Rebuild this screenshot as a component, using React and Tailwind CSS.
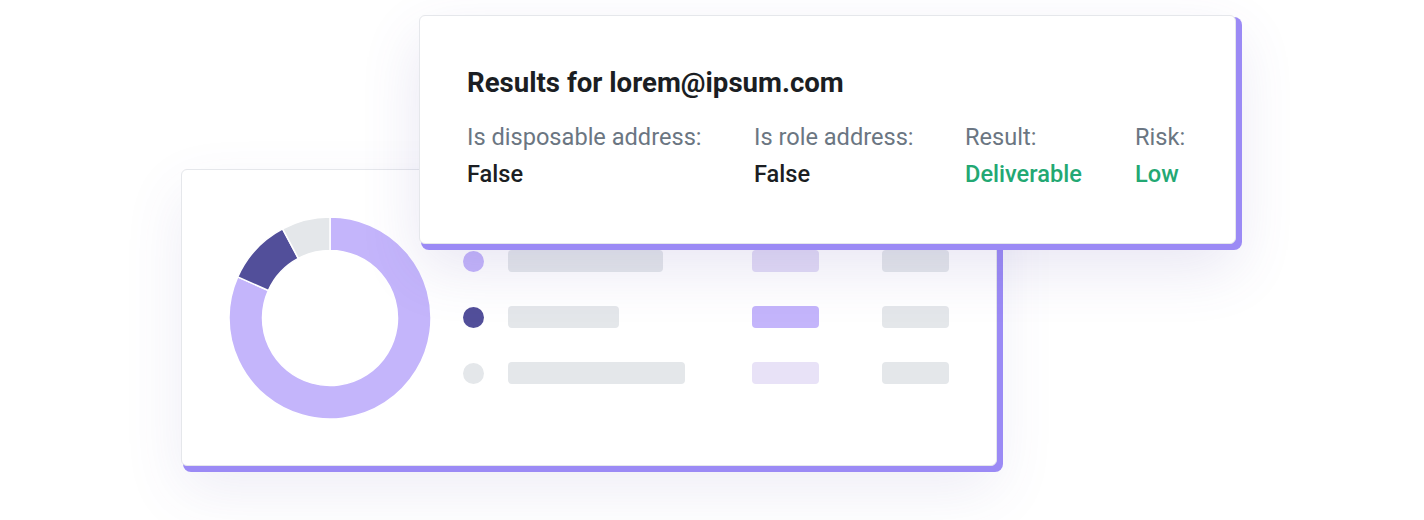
import React from 'react';

const FONT = { fontFamily: 'Roboto, "Liberation Sans", sans-serif' };

// donut segments in degrees, clockwise from 12 o'clock
const segments = [
  { from: 0, to: 294, color: '#c4b5fb' },
  { from: 294, to: 332, color: '#524f9a' },
  { from: 332, to: 360, color: '#e4e7ea' },
];

function arcPath(cx, cy, r1, r2, a0, a1) {
  const rad = (a) => ((a - 90) * Math.PI) / 180;
  const p = (r, a) => [cx + r * Math.cos(rad(a)), cy + r * Math.sin(rad(a))];
  const large = a1 - a0 > 180 ? 1 : 0;
  const [x0, y0] = p(r2, a0);
  const [x1, y1] = p(r2, a1);
  const [x2, y2] = p(r1, a1);
  const [x3, y3] = p(r1, a0);
  return `M${x0} ${y0} A${r2} ${r2} 0 ${large} 1 ${x1} ${y1} L${x2} ${y2} A${r1} ${r1} 0 ${large} 0 ${x3} ${y3} Z`;
}

function Donut() {
  return (
    <svg width="202" height="202" viewBox="0 0 202 202">
      {segments.map((s) => (
        <path
          key={s.from}
          d={arcPath(101, 101, 67.5, 101, s.from, s.to)}
          fill={s.color}
          stroke="#fff"
          strokeWidth="1.5"
        />
      ))}
    </svg>
  );
}

const rows = [
  { dot: 'bg-[#c4b5fb]', w: 'w-[155px]', mid: 'bg-[#e2dbf6]' },
  { dot: 'bg-[#524f9a]', w: 'w-[111px]', mid: 'bg-[#c4b5fb]' },
  { dot: 'bg-[#e4e7ea]', w: 'w-[177px]', mid: 'bg-[#e8e2f7]' },
];

function Field({ label, value, green, width }) {
  return (
    <div className={width}>
      <p className="text-[23.6px] leading-[30px] text-[#6b7682]">{label}</p>
      <p
        className={`mt-[7.5px] text-[23.6px] leading-[30px] font-medium ${
          green ? 'text-[#23a873]' : 'text-[#1b1e23]'
        }`}
      >
        {value}
      </p>
    </div>
  );
}

export default function App() {
  return (
    <div className="relative w-full h-[520px] bg-white overflow-hidden" style={FONT}>
      {/* back card with chart */}
      <div className="ml-[181px] pt-[169px]">
        <div className="w-[816px] h-[297px] bg-white rounded-[6px] border border-[#e5e7eb] shadow-[4px_4px_0_2px_#9b8af5,0_24px_60px_rgba(90,80,170,0.10)] flex pl-[47px] pt-[47px]">
          <Donut />
          <div className="ml-[32px] mt-[33px] flex flex-col gap-[34px]">
            {rows.map((r, i) => (
              <div key={i} className="flex items-center h-[22px]">
                <div className={`w-[21px] h-[21px] rounded-full ${r.dot}`} />
                <div className="w-[268px] pl-[24px]">
                  <div className={`h-[22px] rounded-[4px] bg-[#e4e7ea] ${r.w}`} />
                </div>
                <div className="w-[130px]">
                  <div className={`h-[22px] w-[67px] rounded-[4px] ${r.mid}`} />
                </div>
                <div className="h-[22px] w-[67px] rounded-[4px] bg-[#e4e7ea]" />
              </div>
            ))}
          </div>
        </div>
      </div>

      {/* results card on top */}
      <div className="absolute left-[419px] top-[15px] w-[817px] h-[229px] bg-white rounded-[6px] border border-[#e5e7eb] shadow-[4px_4px_0_2px_#9b8af5,0_24px_60px_rgba(90,80,170,0.14)] pl-[47px] pt-[50px]">
        <h1 className="text-[27.6px] leading-[34px] font-bold text-[#1b1e23]">
          Results for lorem@ipsum.com
        </h1>
        <div className="mt-[21.5px] flex">
          <Field label="Is disposable address:" value="False" width="w-[287px]" />
          <Field label="Is role address:" value="False" width="w-[211px]" />
          <Field label="Result:" value="Deliverable" green width="w-[170px]" />
          <Field label="Risk:" value="Low" green />
        </div>
      </div>
    </div>
  );
}
